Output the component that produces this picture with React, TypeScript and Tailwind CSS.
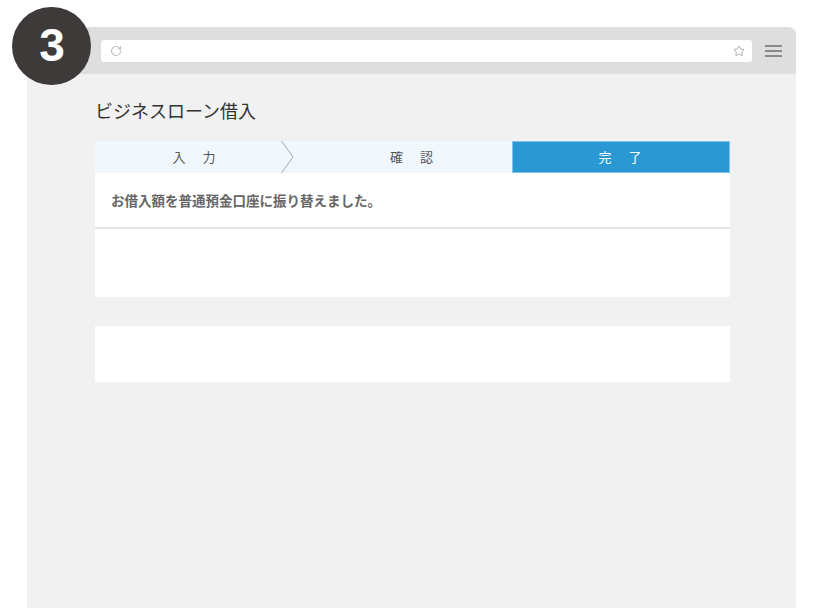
import { RotateCw, Star } from 'lucide-react';

// 完了画面（ステップ3）のモック
export default function App() {
  const jp = { fontFamily: '"Noto Sans CJK JP", "Noto Sans", sans-serif' };

  return (
    <div className="relative w-[824px] h-[608px] bg-white overflow-hidden" style={jp}>
      {/* ステップ番号バッジ */}
      <div className="absolute left-[12px] top-[7px] z-10 w-[79px] h-[78px] rounded-full bg-[#3e3a39] flex items-center justify-center pb-[3px] pl-[1px]">
        <span className="text-white text-[46px] font-bold leading-none" style={{ fontFamily: '"Liberation Sans", Arial, sans-serif' }}>
          3
        </span>
      </div>

      {/* ブラウザ枠 */}
      <div className="ml-[27px] mt-[27px] w-[769px] h-[581px] rounded-t-lg overflow-hidden bg-[#f1f1f1] flex flex-col">
        <div className="h-[47px] bg-[#dedede] flex items-center pl-[74px] pr-[14px] gap-[13px]">
          <div className="flex-1 h-[22px] bg-white rounded-[3px] flex items-center justify-between pl-[9px] pr-[7px]">
            <RotateCw size={12} strokeWidth={2.2} className="text-[#bdbdbd]" />
            <Star size={12} strokeWidth={1.6} className="text-[#9a9a9a]" />
          </div>
          <div className="w-[17px] flex flex-col gap-[3px]">
            <span className="h-[2px] bg-[#8a8a8a]" />
            <span className="h-[2px] bg-[#8a8a8a]" />
            <span className="h-[2px] bg-[#8a8a8a]" />
          </div>
        </div>

        <div className="pl-[68px] pr-[66px] pt-[22px]">
          <h1 className="text-[18px] leading-[28px] text-[#333]">ビジネスローン借入</h1>

          {/* ステップ */}
          <div className="mt-[17px] h-[32px] flex bg-[#f0f7fd] text-[13px] text-[#555]">
            <div className="relative w-[204px] flex items-center justify-center pr-[4px] tracking-[2px]">
              入　力
              <svg className="absolute right-[5px] top-0" width="13" height="32" viewBox="0 0 13 32">
                <polyline points="0.5,0 12,16 0.5,32" fill="none" stroke="#a8a8a8" strokeWidth="1" />
              </svg>
            </div>
            <div className="w-[213px] flex items-center justify-center pl-[14px] tracking-[2px]">確　認</div>
            <div className="flex-1 flex items-center justify-center bg-[#2a98d2] border border-[#7fc2ea] text-white tracking-[2px]">
              完　了
            </div>
          </div>

          {/* 結果カード */}
          <div className="bg-white">
            <p className="h-[56px] flex items-center px-[16px] text-[13.5px] font-bold text-[#666] border-b-2 border-[#e6e6e6]">
              お借入額を普通預金口座に振り替えました。
            </p>
            <div className="h-[68px]" />
          </div>

          <div className="mt-[29px] h-[56px] bg-white" />
        </div>
      </div>
    </div>
  );
}
